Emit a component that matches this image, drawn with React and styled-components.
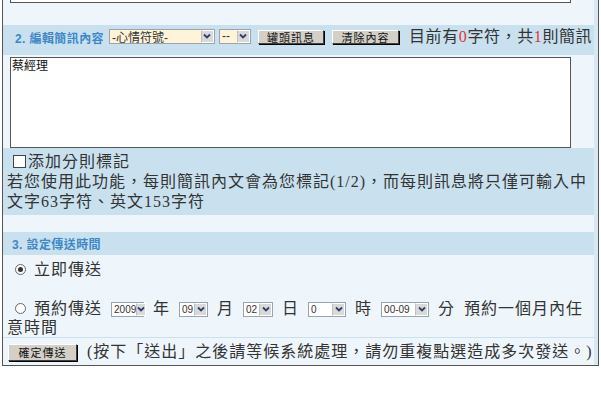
import React from 'react'
import styled, { createGlobalStyle } from 'styled-components'

const GlobalStyle = createGlobalStyle`
    body {
        margin: 0;
        background: #fff;
        font-family: "Liberation Serif", "Noto Sans CJK TC", serif;
        color: #333;
    }
`

const Frame = styled.div`
    margin-left: 2px;
    width: 597px;
    box-sizing: border-box;
    border: 1px solid #555;
    border-top: none;
    padding-right: 4px;
    background: #d6e8f3;
`

const Light = styled.div`
    background: #eef6fb;
`

const Tail = styled(Light)`
    padding: 0 23px 22px 7px;
`

const TailBox = styled.div`
    height: 2px;
    background: #fff;
    border: 1px solid #555;
    border-top: none;
`

const Header = styled.div`
    display: flex;
    align-items: center;
    white-space: nowrap;
    box-sizing: border-box;
    height: ${p => p.h}px;
    padding: 0 0 ${p => p.pb || 0}px ${p => p.pl}px;
    background: #c9e1ef;
`

const Label = styled.span`
    flex-shrink: 0;
    font: bold 12px "Liberation Sans", "Noto Sans CJK TC", sans-serif;
    letter-spacing: 0.4px;
    color: #3d87c8;
`

const Select = styled.span`
    display: inline-flex;
    flex-shrink: 0;
    align-items: center;
    justify-content: space-between;
    box-sizing: border-box;
    width: ${p => p.w}px;
    height: ${p => p.h || 15}px;
    margin-left: ${p => p.ml || 0}px;
    border: 1px solid #9aa4ad;
    background: ${p => p.bg || '#fff'};
    font: ${p => p.small ? '10px "Liberation Sans", sans-serif' : '12px "Liberation Sans", "Noto Sans CJK TC", sans-serif'};
    color: #333;
    letter-spacing: 0;
    word-spacing: 0;
    padding-left: 2px;
    vertical-align: middle;
    position: relative;
    top: -1px;
`

const Arrow = styled.span`
    display: flex;
    align-items: center;
    justify-content: center;
    width: 13px;
    height: 100%;
    box-sizing: border-box;
    border: 1px solid #fff;
    border-left: 1px solid #c0c0c0;
    background: #d9d9d9;
`

const Btn = styled.span`
    display: inline-flex;
    flex-shrink: 0;
    align-items: center;
    justify-content: center;
    box-sizing: border-box;
    width: ${p => p.w}px;
    height: ${p => p.h}px;
    margin-left: ${p => p.ml || 0}px;
    background: #d4d0c8;
    border: 1px solid;
    border-color: #fff #404040 #404040 #fff;
    box-shadow: 1px 1px 0 #000;
    font: 11px "Noto Sans CJK TC", sans-serif;
    color: #111;
    letter-spacing: 1px;
`

const Count = styled.span`
    margin-left: 10px;
    font-size: 16px;
    letter-spacing: 0.6px;
    line-height: 20px;
`

const Red = styled.span`
    color: #e0343a;
`

const TextWrap = styled(Light)`
    padding: 2px 0 0 7px;
`

const TextArea = styled.div`
    width: 561px;
    height: 91px;
    box-sizing: border-box;
    border: 1px solid #555;
    background: #fff;
    padding: 0 1px;
    font: 12px/13px "Noto Sans CJK TC", sans-serif;
    color: #111;
`

const Band = styled.div`
    background: #c9e1ef;
    padding: 4px 0 3px 4px;
    font-size: 16px;
    line-height: 20px;
    letter-spacing: 1px;
    white-space: nowrap;
`

const Check = styled.span`
    display: inline-block;
    width: 11px;
    height: 11px;
    border: 1px solid #444;
    margin: 0 2px 0 6px;
    vertical-align: -1px;
    background: #fff;
`

const Gap = styled(Light)`
    height: 17px;
`

const Options = styled(Light)`
    padding: 5px 0 0 4px;
    font-size: 16px;
    letter-spacing: 1px;
    word-spacing: 4px;
    white-space: nowrap;
    border-bottom: 1px solid #c9e1ef;
`

const Line = styled.div`
    line-height: ${p => p.lh}px;
    margin-bottom: ${p => p.mb || 0}px;
`

const Radio = styled.span`
    display: inline-block;
    position: relative;
    width: 9px;
    height: 9px;
    border: 1px solid #666;
    border-radius: 50%;
    margin: 0 8px 0 8px;
    vertical-align: 0;
    background: #fff;
    &::after {
        content: '';
        display: ${p => p.on ? 'block' : 'none'};
        position: absolute;
        left: 2px;
        top: 2px;
        width: 5px;
        height: 5px;
        border-radius: 50%;
        background: #333;
    }
`

const Footer = styled(Light)`
    display: flex;
    align-items: center;
    white-space: nowrap;
    padding: 5px 0 4px 5px;
`

const Note = styled.span`
    margin-left: 10px;
    font-size: 16px;
    letter-spacing: 1px;
    line-height: 18px;
`

function Chevron() {
    return (
        <svg width="8" height="6" viewBox="0 0 8 6">
            <path d="M1 1.5 L4 4.5 L7 1.5" fill="none" stroke="#2f3f6a" strokeWidth="1.8" />
        </svg>
    )
}

function Sel({ w, children, ...rest }) {
    return (
        <Select w={w} {...rest}>
            <span>{children}</span>
            <Arrow><Chevron /></Arrow>
        </Select>
    )
}

function App() {
    return (
        <>
            <GlobalStyle />
            <Frame>
                <Tail><TailBox /></Tail>

                <Header h={30} pb={6} pl={12}>
                    <Label>2. 編輯簡訊內容</Label>
                    <Sel w={106} ml={5} bg="#fff4d9">-心情符號-</Sel>
                    <Sel w={32} ml={4} bg="#fff4d9">--</Sel>
                    <Btn w={66} h={14} ml={7}>罐頭訊息</Btn>
                    <Btn w={67} h={14} ml={8}>清除內容</Btn>
                    <Count>目前有<Red>0</Red>字符，共<Red>1</Red>則簡訊</Count>
                </Header>
                <TextWrap>
                    <TextArea>蔡經理</TextArea>
                </TextWrap>
                <Band>
                    <div><Check />添加分則標記</div>
                    <div>若您使用此功能，每則簡訊內文會為您標記(1/2)，而每則訊息將只僅可輸入中</div>
                    <div>文字63字符、英文153字符</div>
                </Band>
                <Gap />

                <Header h={23} pl={9}>
                    <Label>3. 設定傳送時間</Label>
                </Header>
                <Options>
                    <Line lh={20} mb={19}><Radio on />立即傳送</Line>
                    <Line lh={19}>
                        <Radio />預約傳送 <Sel w={33} h={15} small>2009</Sel> 年 <Sel w={29} h={15} small>09</Sel> 月 <Sel w={30} h={15} small>02</Sel> 日 <Sel w={38} h={15} small>0</Sel> 時 <Sel w={48} h={15} small>00-09</Sel> 分 預約一個月內任<br />意時間
                    </Line>
                </Options>
                <Footer>
                    <Btn w={69} h={17}>確定傳送</Btn>
                    <Note>(按下「送出」之後請等候系統處理，請勿重複點選造成多次發送。)</Note>
                </Footer>
            </Frame>
        </>
    )
}

export default App
